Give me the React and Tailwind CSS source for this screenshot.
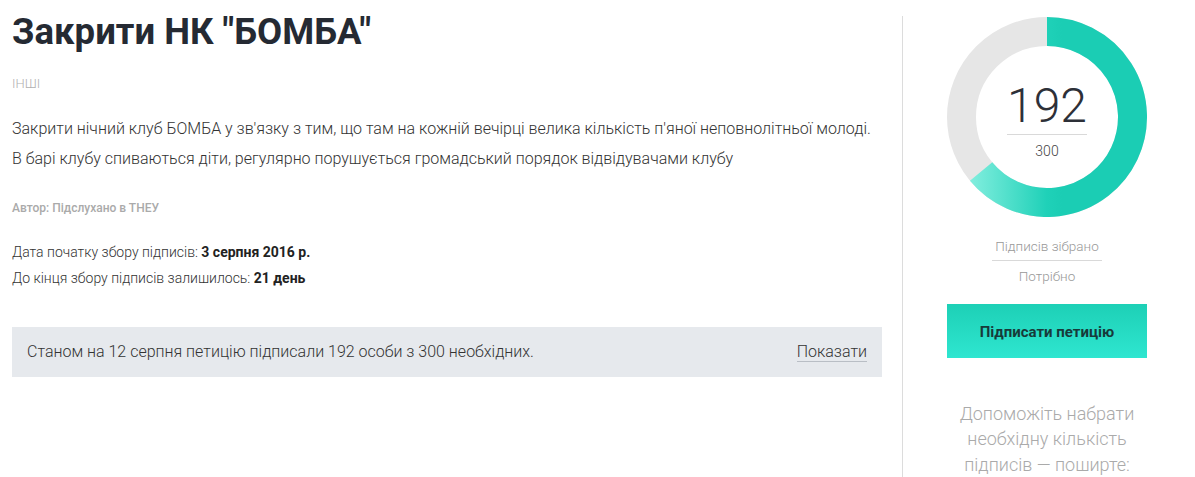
import React from 'react';

const roboto = { fontFamily: 'Roboto, "Noto Sans", sans-serif' };

function Donut({ value, total }) {
  const r = 85.5;
  const a = (value / total) * 2 * Math.PI;
  const ex = 100 + r * Math.sin(a);
  const ey = 100 - r * Math.cos(a);
  const large = value / total > 0.5 ? 1 : 0;
  return (
    <div className="relative w-[200px] h-[200px]">
      <svg width="200" height="200" viewBox="0 0 200 200">
        <defs>
          <linearGradient id="ring" gradientUnits="userSpaceOnUse" x1="15" y1="0" x2="115" y2="0">
            <stop offset="0" stopColor="#8cf1e2" />
            <stop offset="0.85" stopColor="#1fd1b8" />
            <stop offset="1" stopColor="#1bcdb4" />
          </linearGradient>
        </defs>
        <circle cx="100" cy="100" r={r} fill="none" stroke="#e6e6e6" strokeWidth="29" />
        <path
          d={`M 100 ${100 - r} A ${r} ${r} 0 ${large} 1 ${ex} ${ey}`}
          fill="none"
          stroke="url(#ring)"
          strokeWidth="29"
        />
      </svg>
      <div className="absolute inset-0 flex flex-col items-center pt-[63px]">
        <div className="text-[48px] leading-[52px] font-light text-[#2d3038]">192</div>
        <div className="w-[80px] border-t border-[#d9d9d9] mt-[2px]" />
        <div className="text-[14px] leading-[20px] text-[#444] font-light mt-[6px]">300</div>
      </div>
    </div>
  );
}

export default function App() {
  return (
    <div className="bg-white w-[1195px] h-[477px] overflow-hidden flex" style={roboto}>
      {/* Main petition info */}
      <div className="w-[870px] ml-[12px] shrink-0">
        <h1 className="text-[36.5px] leading-[40px] font-bold text-[#252a33] mt-[12px]">Закрити НК "БОМБА"</h1>
        <div className="text-[13px] leading-[16px] text-[#b0b0b0] font-light mt-[24px]">ІНШІ</div>
        <div className="text-[16px] leading-[30px] text-[#333] font-light mt-[22px]">
          <p>Закрити нічний клуб БОМБА у зв'язку з тим, що там на кожній вечірці велика кількість п'яної неповнолітньої молоді.</p>
          <p>В барі клубу спиваються діти, регулярно порушується громадський порядок відвідувачами клубу</p>
        </div>
        <div className="text-[12px] leading-[14px] text-[#aaa] font-medium mt-[27px]">Автор: Підслухано в ТНЕУ</div>
        <div className="text-[14px] leading-[26px] text-[#333] font-light mt-[24px]">
          <div>Дата початку збору підписів: <b className="font-bold text-[#222]">3 серпня 2016 р.</b></div>
          <div>До кінця збору підписів залишилось: <b className="font-bold text-[#222]">21 день</b></div>
        </div>
        <div className="mt-[36px] h-[50px] bg-[#e6e9ed] flex items-center justify-between px-[15px] text-[16px] font-light text-[#333]">
          <span>Станом на 12 серпня петицію підписали 192 особи з 300 необхідних.</span>
          <span className="border-b border-[#b9bec5] leading-[18px]">Показати</span>
        </div>
      </div>

      {/* Divider */}
      <div className="ml-[20px] mt-[16px] border-l border-[#dcdcdc] h-full" />

      {/* Signature widget */}
      <div className="ml-[44px] w-[200px] flex flex-col items-center pt-[17px]">
        <Donut value={192} total={300} />
        <div className="mt-[19px] text-[13.5px] leading-[20px] text-[#999] font-light pb-[4px] border-b border-[#d9d9d9] w-[110px] text-center whitespace-nowrap">
          Підписів зібрано
        </div>
        <div className="text-[13.5px] leading-[20px] text-[#999] font-light mt-[5px]">Потрібно</div>
        <button className="mt-[18px] w-[200px] h-[60px] bg-gradient-to-b from-[#1dd0b6] to-[#2ee6d0] text-[15px] font-bold text-[#173a3a] pt-[2px]">
          Підписати петицію
        </button>
        <div className="mt-[43px] w-[200px] text-center text-[18px] leading-[25.5px] font-light text-[#aaa]">
          Допоможіть набрати необхідну кількість підписів — поширте:
        </div>
      </div>
    </div>
  );
}
